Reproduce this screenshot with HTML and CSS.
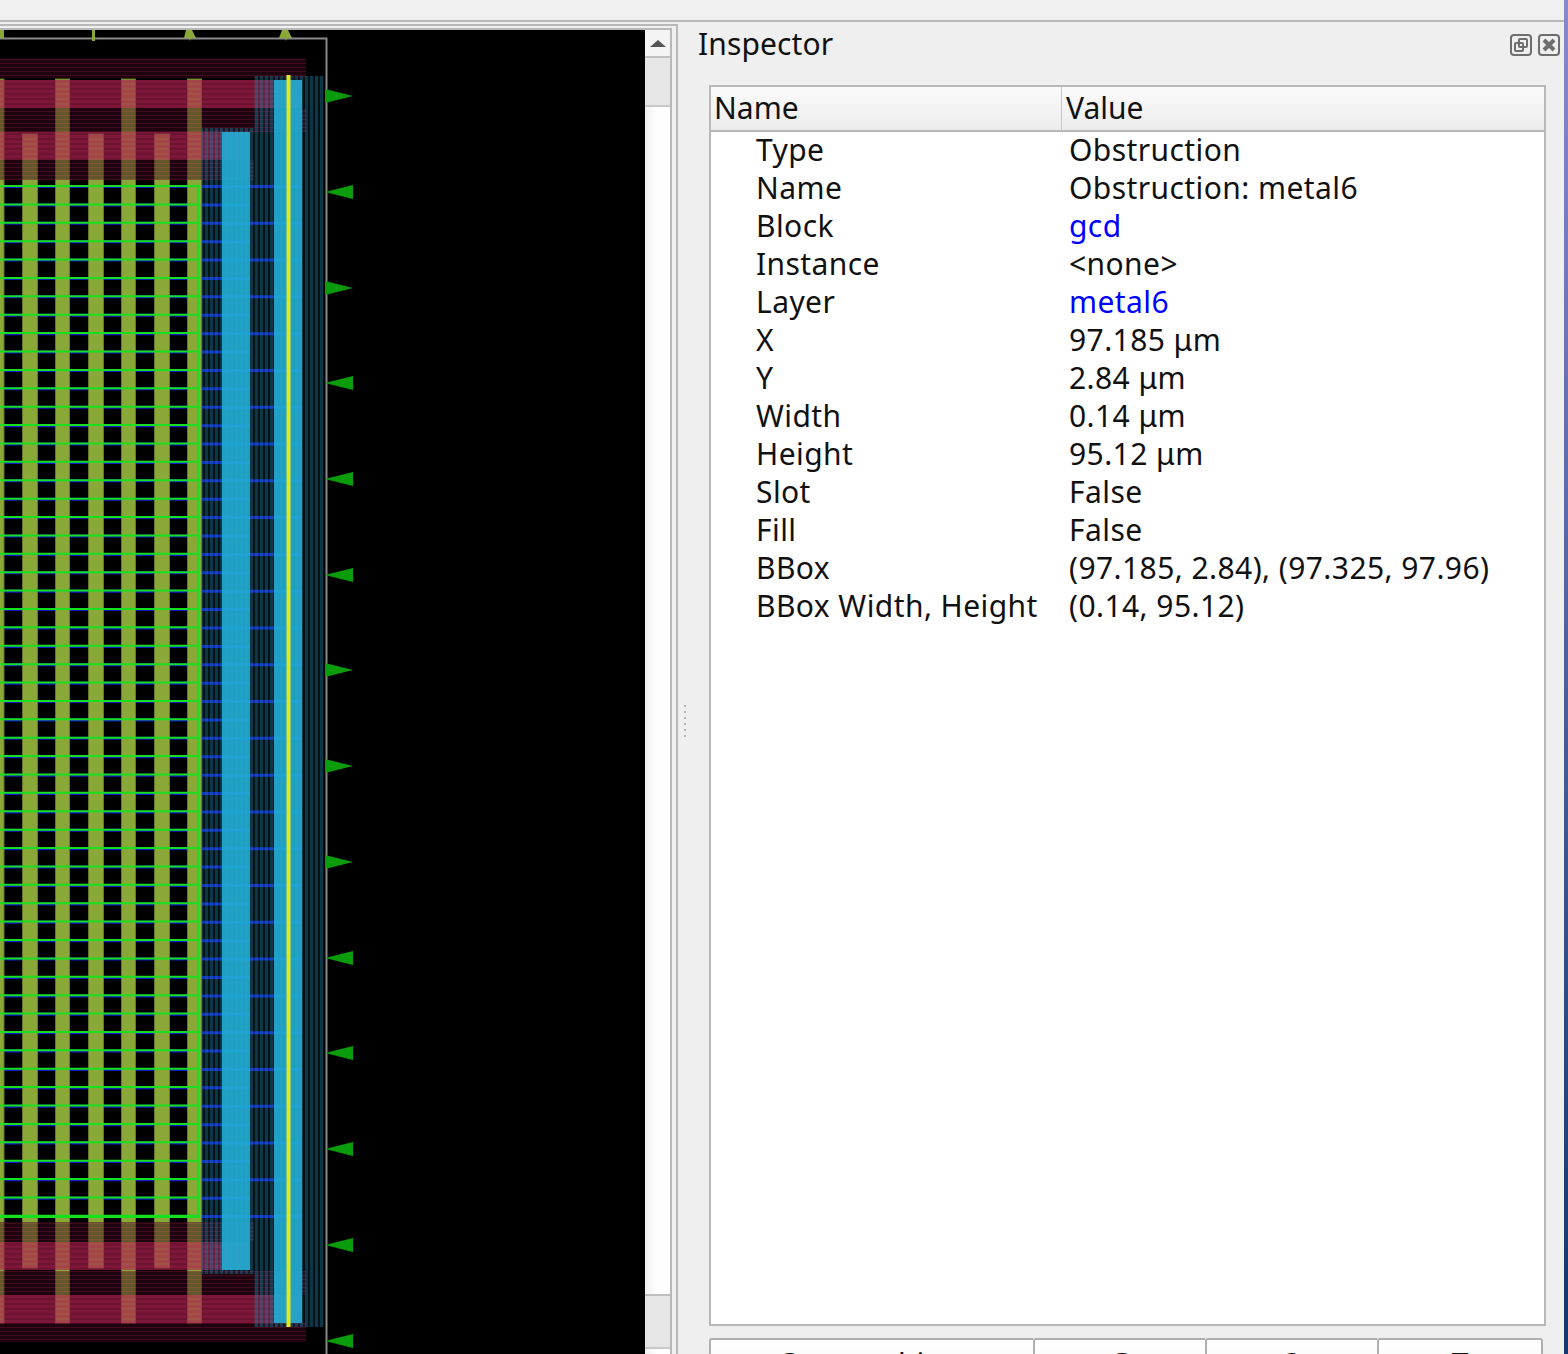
FILE: index.html
```html
<!DOCTYPE html>
<html lang="en">
<head>
    <meta charset="UTF-8">
    <title>Inspector</title>
    <link rel="stylesheet" href="styles.css">
</head>
<body>
    <div class="menu-bar"></div>
    <div class="workspace">
        <div class="view-frame">
            <div class="view-inner">
                <div class="view-box">
                    <svg class="layout-view" width="645" height="1326" viewBox="0 30 645 1326">
                        <defs>
                            <pattern id="dark-lines" width="4" height="4" patternUnits="userSpaceOnUse">
                                <rect width="4" height="3" fill="rgba(60,8,30,.5)"/>
                                <rect y="3" width="4" height="1" fill="rgba(120,20,55,.55)"/>
                            </pattern>
                            <pattern id="band-lines" width="4" height="5" patternUnits="userSpaceOnUse">
                                <rect width="4" height="3" fill="rgba(174,30,80,.72)"/>
                                <rect y="3" width="4" height="2" fill="rgba(174,30,80,.62)"/>
                            </pattern>
                            <pattern id="teal-lines" width="5" height="4" patternUnits="userSpaceOnUse">
                                <rect width="3" height="4" fill="rgba(30,130,170,.42)"/>
                                <rect x="3" width="2" height="4" fill="rgba(30,130,170,.14)"/>
                            </pattern>
                            <polygon id="pin-right" points="325,-7 353,0 325,7"/>
                            <polygon id="pin-left" points="325,0 353,-7 353,7"/>
                        </defs>

                        <!-- routing under the stripes -->
                        <line class="blue-long" x1="151" y1="185" x2="151" y2="1218"/>
                        <line class="blue-short" x1="125" y1="203.4" x2="125" y2="1218"/>

                        <!-- power stripes -->
                        <g class="olive">
                            <rect x="-2" y="79" width="6" height="1244"/>
                            <rect x="55.5" y="79" width="14" height="1244"/>
                            <rect x="121.5" y="79" width="14" height="1244"/>
                            <rect x="187.5" y="79" width="14" height="1244"/>
                            <rect x="22.5" y="134" width="15" height="1134"/>
                            <rect x="88.5" y="134" width="15" height="1134"/>
                            <rect x="154.5" y="134" width="15" height="1134"/>
                        </g>

                        <line class="green-h" x1="99" y1="185" x2="99" y2="1218"/>
                        <rect class="green-box" x="-4" y="186" width="202" height="1031"/>

                        <!-- rails -->
                        <rect fill="url(#dark-lines)" x="0" y="58" width="306" height="20"/>
                        <rect fill="url(#dark-lines)" x="0" y="108" width="306" height="24"/>
                        <rect fill="url(#dark-lines)" x="0" y="160" width="254" height="20"/>
                        <rect fill="url(#dark-lines)" x="0" y="1222" width="254" height="20"/>
                        <rect fill="url(#dark-lines)" x="0" y="1271" width="306" height="24"/>
                        <rect fill="url(#dark-lines)" x="0" y="1323" width="306" height="19"/>
                        <rect fill="url(#band-lines)" x="0" y="80" width="302" height="28"/>
                        <rect fill="url(#band-lines)" x="0" y="132" width="250" height="28"/>
                        <rect fill="url(#band-lines)" x="0" y="1242" width="250" height="28"/>
                        <rect fill="url(#band-lines)" x="0" y="1295" width="302" height="28"/>

                        <!-- obstruction columns -->
                        <rect fill="url(#teal-lines)" x="202" y="128" width="52" height="1146"/>
                        <rect fill="url(#teal-lines)" x="254" y="76" width="70" height="1251"/>
                        <rect class="sky" x="222" y="132" width="28" height="1138"/>
                        <rect class="sky" x="274" y="80" width="28" height="1243"/>
                        <rect class="selected" x="286.5" y="75" width="4" height="1252"/>

                        <!-- die outline -->
                        <path class="die" d="M0 38.5H326.5V1356"/>

                        <!-- top pins -->
                        <g class="olive-pin">
                            <polygon points="0,30 4,30 4,38 0,38"/>
                            <polygon points="92,30 95,30 95,41 92,41"/>
                            <polygon points="186,30 192,30 196,38 191,38 190,41 189,38 184,38"/>
                            <polygon points="282,30 288,30 292,38 287,38 286,41 285,38 279,38"/>
                        </g>

                        <!-- side pins -->
                        <g class="green-pin">
                            <use href="#pin-right" y="96"/>
                            <use href="#pin-left" y="192"/>
                            <use href="#pin-right" y="288"/>
                            <use href="#pin-left" y="383"/>
                            <use href="#pin-left" y="479"/>
                            <use href="#pin-left" y="575"/>
                            <use href="#pin-right" y="670"/>
                            <use href="#pin-right" y="766"/>
                            <use href="#pin-right" y="862"/>
                            <use href="#pin-left" y="958"/>
                            <use href="#pin-left" y="1053"/>
                            <use href="#pin-left" y="1149"/>
                            <use href="#pin-left" y="1245"/>
                            <use href="#pin-left" y="1341"/>
                        </g>
                    </svg>
                    <div class="scrollbar">
                        <div class="scroll-btn"><span class="scroll-arrow"></span></div>
                        <div class="scroll-handle"></div>
                        <div class="scroll-track"></div>
                        <div class="scroll-handle scroll-handle-end"></div>
                    </div>
                </div>
            </div>
        </div>

        <div class="dock">
            <div class="dock-grip">
                <span></span><span></span><span></span><span></span><span></span><span></span>
            </div>
            <div class="dock-title">
                <span class="dock-name">Inspector</span>
                <div class="dock-icons">
                    <svg width="22" height="22" viewBox="0 0 22 22">
                        <rect class="icon-line" x="1" y="1" width="20" height="20" rx="3"/>
                        <rect class="icon-line" x="9" y="5" width="8" height="8" rx="1"/>
                        <rect class="icon-line" x="5" y="9" width="8" height="8" rx="1"/>
                    </svg>
                    <svg width="22" height="22" viewBox="0 0 22 22">
                        <rect class="icon-line" x="1" y="1" width="20" height="20" rx="3"/>
                        <path class="icon-cross" d="M6 6L16 16M16 6L6 16"/>
                    </svg>
                </div>
            </div>
            <table class="props">
                <colgroup>
                    <col class="col-name">
                    <col>
                </colgroup>
                <thead>
                    <tr><th class="head-name">Name</th><th>Value</th></tr>
                </thead>
                <tbody>
                    <tr><td>Type</td><td>Obstruction</td></tr>
                    <tr><td>Name</td><td>Obstruction: metal6</td></tr>
                    <tr><td>Block</td><td class="link">gcd</td></tr>
                    <tr><td>Instance</td><td>&lt;none&gt;</td></tr>
                    <tr><td>Layer</td><td class="link">metal6</td></tr>
                    <tr><td>X</td><td>97.185 μm</td></tr>
                    <tr><td>Y</td><td>2.84 μm</td></tr>
                    <tr><td>Width</td><td>0.14 μm</td></tr>
                    <tr><td>Height</td><td>95.12 μm</td></tr>
                    <tr><td>Slot</td><td>False</td></tr>
                    <tr><td>Fill</td><td>False</td></tr>
                    <tr><td>BBox</td><td>(97.185, 2.84), (97.325, 97.96)</td></tr>
                    <tr><td>BBox Width, Height</td><td>(0.14, 95.12)</td></tr>
                    <tr class="filler"><td></td><td></td></tr>
                </tbody>
            </table>
            <div class="actions">
                <button>Center object</button>
                <button>G</button>
                <button>?</button>
                <button>T</button>
            </div>
        </div>
        <div class="desktop-edge"></div>
    </div>
</body>
</html>
```

FILE: styles.css
```css
html, body {
    margin: 0;
    height: 100%;
    overflow: hidden;
}

body {
    background: #efefef;
    color: #111;
    font-family: "Noto Sans", sans-serif;
    font-size: 30px;
}

.menu-bar {
    height: 20px;
    background: #f0f0f0;
    border-bottom: 2px solid #b8b8b8;
}

.workspace {
    display: flex;
    height: 1332px;
}

/* left side, layout view */
.view-frame {
    width: 678px;
    flex: none;
    box-sizing: border-box;
    padding-top: 2px;
}

.view-inner {
    height: 100%;
    box-sizing: border-box;
    border-top: 2px solid #b8b8b8;
    border-right: 2px solid #b8b8b8;
    padding: 2px 4px 0 0;
}

.view-box {
    display: flex;
    height: 100%;
    box-sizing: border-box;
    border-top: 2px solid #b8b8b8;
}

.layout-view {
    display: block;
    flex: none;
    background: #000;
}

.olive rect {
    fill: #8aa838;
    stroke: #66782a;
    stroke-width: 1;
}

.olive-pin polygon {
    fill: #8aa838;
}

.green-pin {
    fill: #0a9c0a;
}

.blue-long {
    stroke: #0a1fc4;
    stroke-width: 302;
    stroke-dasharray: 3 33.79;
}

.blue-short {
    stroke: #0a1fc4;
    stroke-width: 250;
    stroke-dasharray: 3 33.79;
}

.green-h {
    stroke: #18e020;
    stroke-width: 198;
    stroke-dasharray: 2 16.39;
}

.green-box {
    fill: none;
    stroke: #18e020;
    stroke-width: 2;
}

.sky {
    fill: #22aed4;
    fill-opacity: .9;
}

.selected {
    fill: #e0e820;
}

.die {
    fill: none;
    stroke: #8a8a8a;
    stroke-width: 2;
}

.scrollbar {
    flex: 1;
    display: flex;
    flex-direction: column;
    border-right: 2px solid #b8b8b8;
    background: linear-gradient(90deg, #f0f0f0, #fff 50%);
}

.scroll-btn {
    height: 26px;
    display: flex;
    align-items: center;
    justify-content: center;
    background: #f4f4f4;
    border-bottom: 2px solid #c0c0c0;
}

.scroll-arrow {
    width: 0;
    height: 0;
    border-left: 8px solid transparent;
    border-right: 8px solid transparent;
    border-bottom: 7px solid #555;
}

.scroll-handle {
    height: 47px;
    background: #e6e6e6;
    border-bottom: 2px solid #c8c8c8;
}

.scroll-track {
    flex: 1;
}

.scroll-handle-end {
    height: 51px;
    margin-bottom: 5px;
    border-top: 2px solid #c0c0c0;
}

/* right side, inspector dock */
.dock {
    flex: 1;
    position: relative;
    padding: 0 18px 0 31px;
    min-width: 0;
}

.dock-grip {
    position: absolute;
    left: 6px;
    top: 683px;
    display: flex;
    flex-direction: column;
    gap: 4px;
}

.dock-grip span {
    width: 2px;
    height: 2px;
    background: #b4b4b4;
}

.dock-title {
    height: 63px;
    display: flex;
    align-items: flex-start;
    justify-content: space-between;
    margin: 0 -10px 0 -11px;
}

.dock-name {
    line-height: 44px;
    letter-spacing: .1px;
}

.dock-icons {
    display: flex;
    gap: 6px;
    padding-top: 12px;
}

.icon-line {
    fill: none;
    stroke: #6e6e6e;
    stroke-width: 2;
}

.icon-cross {
    fill: none;
    stroke: #6e6e6e;
    stroke-width: 4;
}

.props {
    width: 837px;
    height: 1241px;
    table-layout: fixed;
    border-collapse: separate;
    border-spacing: 0;
    border: 2px solid #b8b8b8;
    background: #fff;
}

.col-name {
    width: 351px;
}

.props th {
    height: 45px;
    padding: 0 0 2px 4px;
    box-sizing: border-box;
    font-weight: normal;
    text-align: left;
    line-height: 38px;
    background: linear-gradient(#fbfbfb, #ececec);
    border-bottom: 2px solid #b8b8b8;
}

.props th.head-name {
    padding-left: 3px;
    border-right: 1px solid #c8c8c8;
}

.props td {
    height: 38px;
    box-sizing: border-box;
    padding: 0 0 2px 7px;
    line-height: 36px;
    letter-spacing: .42px;
    white-space: nowrap;
}

.props td:first-child {
    padding-left: 45px;
}

.props .filler td {
    height: auto;
}

.link {
    color: #0000ff;
}

.actions {
    display: grid;
    grid-template-columns: 324px 172px 172px 166px;
    margin-top: 12px;
}

.actions button {
    height: 50px;
    padding: 0;
    box-sizing: border-box;
    font: inherit;
    line-height: 38px;
    color: #111;
    background: linear-gradient(#fff, #f4f4f4);
    border: 2px solid #b0b0b0;
    border-bottom: 0;
    border-right-width: 0;
    border-radius: 3px 0 0 0;
}

.actions button:last-child {
    border-right-width: 2px;
    border-radius: 3px 3px 0 0;
}

.desktop-edge {
    position: absolute;
    top: 0;
    right: 0;
    width: 4px;
    height: 100%;
    background: linear-gradient(#8888cc, #7f80c6 10%, #15396e 95%);
}
```
